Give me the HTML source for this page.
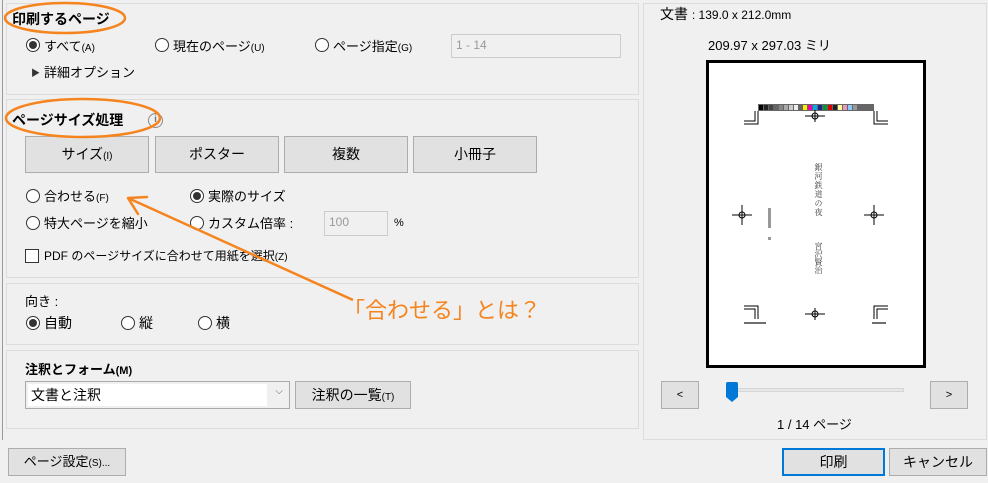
<!DOCTYPE html>
<html><head><meta charset="utf-8"><style>
*{box-sizing:border-box;margin:0;padding:0}
body{width:988px;height:483px;background:#f0f0f0;font-family:"Liberation Sans","Noto Sans CJK JP",sans-serif;font-size:13px;color:#000;position:relative;overflow:hidden}
.a{position:absolute;white-space:nowrap}
.sec{position:absolute;border:1px solid #dcdcdc;left:6px;width:633px}
.r{position:absolute;width:14px;height:14px;border:1px solid #333;border-radius:50%;background:#fff}
.r.on::after{content:"";position:absolute;left:2px;top:2px;width:8px;height:8px;border-radius:50%;background:#333}
.btn{position:absolute;background:#e1e1e1;border:1px solid #adadad;text-align:center;font-size:14px}
.sm{font-size:10px}
.b{font-weight:bold}
.tb{position:absolute;border:1px solid #ccc;background:#f0f0f0;color:#999;font-size:12px;padding:3px 4px}
.v{position:absolute;writing-mode:vertical-rl;font-family:"Noto Serif CJK SC",serif;color:#333;line-height:1}
</style></head><body>
<div class="a" style="left:2px;top:0;width:1px;height:440px;background:#999"></div>
<div class="sec" style="top:3px;height:92px"></div>
<div class="sec" style="top:99px;height:179px"></div>
<div class="sec" style="top:283px;height:62px"></div>
<div class="sec" style="top:350px;height:79px"></div>

<div class="a b" style="left:12px;top:9px;font-size:14px">印刷するページ</div>
<div class="r on" style="left:26px;top:38px"></div><div class="a" style="left:44px;top:36px">すべて<span class="sm">(A)</span></div>
<div class="r" style="left:155px;top:38px"></div><div class="a" style="left:173px;top:36px">現在のページ<span class="sm">(U)</span></div>
<div class="r" style="left:315px;top:38px"></div><div class="a" style="left:333px;top:36px">ページ指定<span class="sm">(G)</span></div>
<div class="tb" style="left:451px;top:34px;width:170px;height:24px">1 - 14</div>
<div class="a" style="left:31px;top:66px;font-size:9px;color:#333">▶</div><div class="a" style="left:44px;top:62px">詳細オプション</div>

<div class="a b" style="left:12px;top:110px;font-size:14px">ページサイズ処理</div>
<div class="a" style="left:148px;top:113px;width:15px;height:15px;border:1.5px solid #888;border-radius:50%;font-size:10px;color:#777;text-align:center;line-height:12px;font-weight:bold">i</div>
<div class="btn" style="left:25px;top:136px;width:124px;height:37px;line-height:35px">サイズ<span class="sm">(I)</span></div>
<div class="btn" style="left:155px;top:136px;width:124px;height:37px;line-height:35px">ポスター</div>
<div class="btn" style="left:284px;top:136px;width:124px;height:37px;line-height:35px">複数</div>
<div class="btn" style="left:413px;top:136px;width:124px;height:37px;line-height:35px">小冊子</div>
<div class="r" style="left:26px;top:189px"></div><div class="a" style="left:44px;top:186px">合わせる<span class="sm">(F)</span></div>
<div class="r on" style="left:190px;top:189px"></div><div class="a" style="left:208px;top:186px">実際のサイズ</div>
<div class="r" style="left:26px;top:216px"></div><div class="a" style="left:44px;top:213px">特大ページを縮小</div>
<div class="r" style="left:190px;top:216px"></div><div class="a" style="left:208px;top:213px">カスタム倍率 :</div>
<div class="tb" style="left:324px;top:211px;width:64px;height:25px">100</div>
<div class="a" style="left:394px;top:217px;font-size:11px">%</div>
<div class="a" style="left:25px;top:249px;width:14px;height:14px;border:1px solid #333;background:#fff"></div>
<div class="a" style="left:44px;top:247px;font-size:12px">PDF のページサイズに合わせて用紙を選択<span class="sm">(Z)</span></div>

<div class="a" style="left:25px;top:291px">向き :</div>
<div class="r on" style="left:26px;top:316px"></div><div class="a" style="left:44px;top:313px;font-size:14px">自動</div>
<div class="r" style="left:121px;top:316px"></div><div class="a" style="left:139px;top:313px;font-size:14px">縦</div>
<div class="r" style="left:198px;top:316px"></div><div class="a" style="left:216px;top:313px;font-size:14px">横</div>

<div class="a b" style="left:25px;top:359px">注釈とフォーム<span style="font-size:11px">(M)</span></div>
<div class="a" style="left:25px;top:381px;width:265px;height:28px;border:1px solid #aaa;background:#f0f0f0"><div style="position:absolute;left:2px;top:2px;width:239px;height:22px;background:#fff;font-size:14px;padding:1px 3px">文書と注釈</div><div style="position:absolute;right:6px;top:4px;font-size:10px;color:#666">⌵</div></div>
<div class="btn" style="left:295px;top:381px;width:116px;height:28px;line-height:26px">注釈の一覧<span class="sm">(T)</span></div>

<div class="btn" style="left:8px;top:448px;width:118px;height:28px;line-height:26px;font-size:13px">ページ設定<span class="sm">(S)...</span></div>
<div class="btn" style="left:782px;top:448px;width:103px;height:28px;line-height:24px;border:2px solid #0078d7">印刷</div>
<div class="btn" style="left:889px;top:448px;width:98px;height:28px;line-height:26px">キャンセル</div>

<div class="a" style="left:643px;top:3px;width:344px;height:437px;border:1px solid #dcdcdc"></div>
<div class="a" style="left:660px;top:4px;font-size:14px">文書 <span style="font-size:12px">: 139.0 x 212.0mm</span></div>
<div class="a" style="left:708px;top:35px;font-size:13px">209.97 x 297.03 ミリ</div>
<svg class="a" style="left:706px;top:60px" width="222" height="310">
<rect x="1.5" y="1.5" width="217" height="305" fill="#fff" stroke="#000" stroke-width="3"/>
<rect x="52" y="44" width="116" height="7" fill="#666"/>
<g><rect x="53" y="45" width="4" height="5" fill="#000"/><rect x="58" y="45" width="4" height="5" fill="#222"/><rect x="63" y="45" width="4" height="5" fill="#444"/><rect x="68" y="45" width="4" height="5" fill="#666"/><rect x="73" y="45" width="4" height="5" fill="#888"/><rect x="78" y="45" width="4" height="5" fill="#aaa"/><rect x="83" y="45" width="4" height="5" fill="#ccc"/><rect x="88" y="45" width="4" height="5" fill="#eee"/>
<rect x="97" y="45" width="4" height="5" fill="#fe0"/><rect x="102" y="45" width="4" height="5" fill="#e0a"/><rect x="107" y="45" width="4" height="5" fill="#0ae"/><rect x="112" y="45" width="4" height="5" fill="#228"/><rect x="117" y="45" width="4" height="5" fill="#093"/><rect x="122" y="45" width="4" height="5" fill="#d00"/><rect x="127" y="45" width="4" height="5" fill="#222"/><rect x="132" y="45" width="4" height="5" fill="#ff9"/><rect x="137" y="45" width="4" height="5" fill="#e9b"/><rect x="142" y="45" width="4" height="5" fill="#8cf"/><rect x="147" y="45" width="4" height="5" fill="#999"/></g>
<g stroke="#000" stroke-width="1" fill="none">
<path d="M52 51V64H38M49 51V61H38M168 51V64H182M171 51V61H182"/>
<path d="M38 246H52V259M38 249H49V259M182 246H168V259M182 249H171V259"/>
<path d="M99 56H119M109 50V62M26 155H46M36 145V165M158 155H178M168 145V165M99 254H119M109 248V260"/>
<circle cx="109" cy="56" r="3"/><circle cx="36" cy="155" r="3"/><circle cx="168" cy="155" r="3"/><circle cx="109" cy="254" r="3"/>
</g>
<g fill="#333"><rect x="62" y="148" width="3" height="20" opacity=".5"/><rect x="62" y="177" width="3" height="3" opacity=".5"/><rect x="38" y="262" width="22" height="2" opacity=".7"/><rect x="166" y="262" width="14" height="2" opacity=".7"/></g>
</svg>
<div class="v" style="left:814px;top:163px;font-size:8px;letter-spacing:1px">銀河鉄道の夜</div>
<div class="v" style="left:814px;top:242px;font-size:8px">宮沢賢治</div>
<div class="btn" style="left:661px;top:381px;width:38px;height:28px;line-height:26px;font-size:11px">&lt;</div>
<div class="btn" style="left:930px;top:381px;width:38px;height:28px;line-height:26px;font-size:11px">&gt;</div>
<div class="a" style="left:731px;top:388px;width:173px;height:4px;background:#e7e7e7;border:1px solid #d6d6d6"></div>
<svg class="a" style="left:725px;top:381px" width="14" height="22"><path d="M1 3Q1 1 3 1H11Q13 1 13 3V16L7 21L1 16Z" fill="#0078d7"/></svg>
<div class="a" style="left:777px;top:414px">1 / 14 ページ</div>

<svg class="a" style="left:0;top:0" width="988" height="483">
<g fill="none" stroke="#f5841f" stroke-width="2.5">
<ellipse cx="65" cy="18" rx="60" ry="15"/>
<ellipse cx="83" cy="118" rx="77" ry="19"/>
<path d="M353 300L128 198"/><path d="M128 198L147 197M128 198L138 214" stroke-linecap="round"/>
</g>
</svg>
<div class="a" style="left:343px;top:293px;color:#f5841f;font-size:22px">「合わせる」とは？</div>
</body></html>
